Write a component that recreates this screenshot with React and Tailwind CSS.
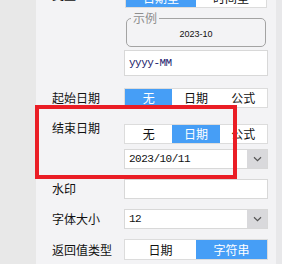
import React from "react";

const Toggle = ({ options, selected, className = "" }) => {
  return (
    <div className={`flex bg-white border border-[#dcdcdc] ${className}`}>
      {options.map((opt, i) => (
        <div
          key={opt}
          className={
            i === selected
              ? "flex-1 flex items-center justify-center bg-[#469ef6] text-white text-[12px]"
              : "flex-1 flex items-center justify-center text-[#111] text-[12px]"
          }
        >
          {opt}
        </div>
      ))}
    </div>
  );
};

const Chevron = () => (
  <svg width="9" height="6" viewBox="0 0 9 6" fill="none">
    <path d="M1 1.2 L4.5 4.6 L8 1.2" stroke="#555" strokeWidth="1.2" />
  </svg>
);

const SelectBox = ({ value, className = "" }) => (
  <div className={`flex bg-white border border-[#d8d8d8] ${className}`}>
    <div className="flex-1 flex items-center pl-[4px] font-['Liberation_Mono',monospace] text-[11px] tracking-[-0.5px] text-[#111]">
      {value}
    </div>
    <div className="w-[20px] bg-[#d9d9dc] flex items-center justify-center">
      <Chevron />
    </div>
  </div>
);

const Label = ({ children, className = "" }) => (
  <div className={`w-[72px] shrink-0 text-[12px] text-[#111] ${className}`}>
    {children}
  </div>
);

export default function App() {
  return (
    <div className="relative w-[282px] h-[264px] flex overflow-hidden bg-[#e7e7e9] font-['Noto_Sans_CJK_SC',sans-serif]">
      <div className="w-[36px] shrink-0 bg-[#e8e8e8]" />
      <div className="w-[240px] shrink-0 bg-[#f3f3f5] pl-[16px] pr-[8px] flex flex-col">
        {/* 类型 */}
        <div className="flex items-center h-[21px] -mt-[13px]">
          <Label className="-mt-[5px]">类型</Label>
          <Toggle
            options={["日期型", "时间型"]}
            selected={0}
            className="ml-px w-[142px] h-full"
          />
        </div>

        {/* 示例 */}
        <div className="flex mt-[4px]">
          <div className="w-[72px] shrink-0" />
          <fieldset className="ml-[2px] w-[140px] border border-[#a3a3a3] rounded-[5px] px-0">
            <legend className="ml-[4px] px-[2px] text-[12px] leading-[12px] text-[#8e8e8e]">
              示例
            </legend>
            <div className="h-[22px] flex items-center justify-center font-['Liberation_Sans',sans-serif] text-[9px] text-[#111]">
              2023-10
            </div>
          </fieldset>
        </div>

        {/* 格式 */}
        <div className="flex mt-[3px]">
          <div className="w-[72px] shrink-0" />
          <div className="flex-1 h-[26px] bg-white border border-[#d8d8d8] flex items-center pl-[4px] font-['Liberation_Mono',monospace] text-[11px] tracking-[-0.5px] text-[#1a1a6a]">
            yyyy-MM
          </div>
        </div>

        {/* 起始日期 */}
        <div className="flex items-center mt-[12px] h-[20px]">
          <Label>起始日期</Label>
          <Toggle options={["无", "日期", "公式"]} selected={0} className="flex-1 h-full" />
        </div>

        {/* 结束日期 */}
        <div className="flex items-start mt-[16px]">
          <Label className="leading-[12px] -mt-[2px]">结束日期</Label>
          <div className="flex-1 flex flex-col gap-[5px]">
            <Toggle options={["无", "日期", "公式"]} selected={1} className="h-[20px]" />
            <SelectBox value="2023/10/11" className="h-[20px]" />
          </div>
        </div>

        {/* 水印 */}
        <div className="flex items-center mt-[10px] h-[20px]">
          <Label>水印</Label>
          <div className="flex-1 h-full bg-white border border-[#d8d8d8]" />
        </div>

        {/* 字体大小 */}
        <div className="flex items-center mt-[10px] h-[20px]">
          <Label>字体大小</Label>
          <SelectBox value="12" className="flex-1 h-full" />
        </div>

        {/* 返回值类型 */}
        <div className="flex items-center mt-[10px] h-[21px]">
          <Label>返回值类型</Label>
          <Toggle options={["日期", "字符串"]} selected={1} className="flex-1 h-full" />
        </div>
      </div>
      <div className="flex-1 bg-[#e8e8ea]" />

      {/* highlight */}
      <div className="absolute left-[35px] top-[105px] w-[202px] h-[74px] border-[4px] border-[#ea1d25] pointer-events-none" />
    </div>
  );
}
